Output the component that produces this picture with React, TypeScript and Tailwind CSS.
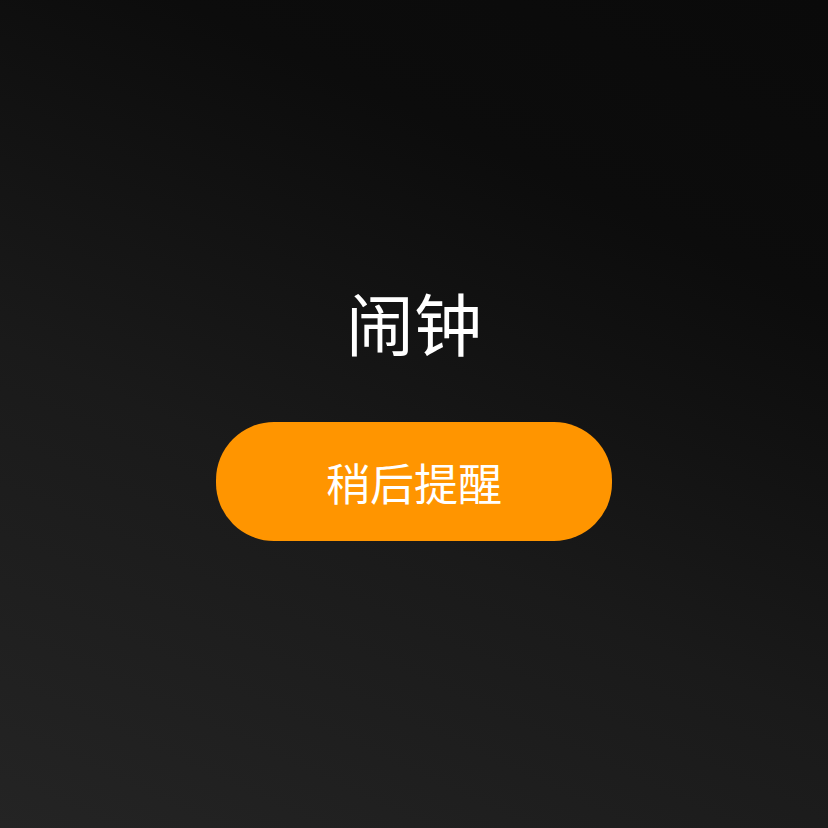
export default function App() {
  return (
    <div
      className="w-[828px] h-[828px] flex flex-col items-center pt-[288px] bg-[linear-gradient(25deg,#242424_0%,#1a1a1a_40%,#0c0c0c_75%,#0a0a0a_100%)]"
      style={{ fontFamily: '"Noto Sans CJK SC", "Noto Sans", sans-serif' }}
    >
      <div className="text-white text-[68px] leading-none">闹钟</div>
      <button className="mt-[66px] w-[396px] h-[119px] rounded-[58px] bg-[#ff9500] text-white text-[44px] leading-none flex items-center justify-center">
        稍后提醒
      </button>
    </div>
  );
}
